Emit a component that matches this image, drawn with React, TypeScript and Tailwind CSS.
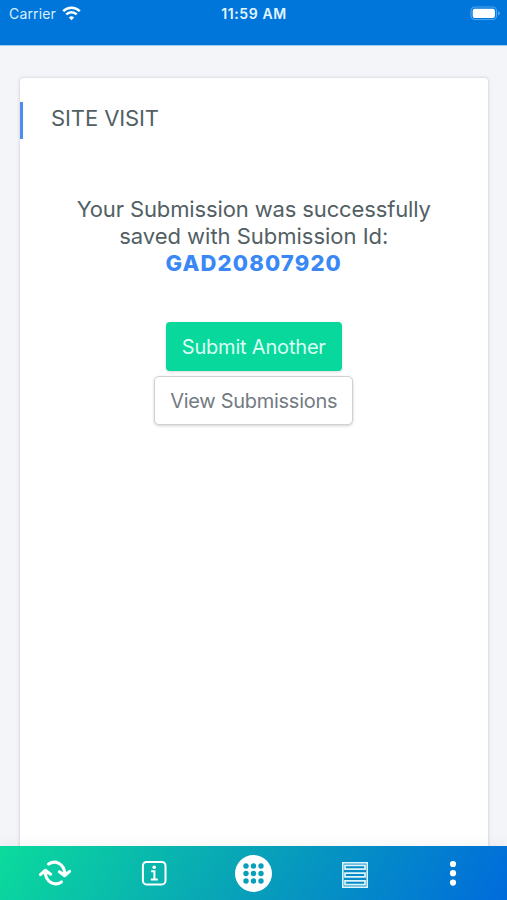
import type { ReactNode } from "react";

function WifiIcon() {
  return (
    <svg className="-mt-[2px] ml-[6px] h-[15px] w-[19px]" viewBox="0 0 19 15" fill="none" stroke="#fff" strokeWidth="2.6">
      <path d="M1.2 5.1a11.8 11.8 0 0 1 16.6 0" />
      <path d="M4.3 8.4a7.4 7.4 0 0 1 10.4 0" />
      <path d="M9.5 14.3 6.8 11.5a3.9 3.9 0 0 1 5.4 0z" fill="#fff" stroke="none" />
    </svg>
  );
}

function BatteryIcon() {
  return (
    <svg className="-mr-px -mt-[2px] h-[15px] w-[31px]" viewBox="0 0 31 15">
      <rect x="1" y="1" width="25.5" height="12.5" rx="3.8" fill="none" stroke="#4fa5ee" strokeWidth="1.2" />
      <rect x="2.7" y="2.7" width="22.2" height="9.2" rx="2" fill="#fff" />
      <path d="M28 5.2q2 .6 2 2.1t-2 2.1z" fill="#4fa5ee" />
    </svg>
  );
}

function RefreshIcon() {
  return (
    <svg className="h-[28px] w-[34px]" viewBox="0 0 34 28" fill="none" stroke="#fff" strokeWidth="3" strokeLinecap="round" strokeLinejoin="round">
      <path d="M10.6 5.1C17 .6 26.2 4.4 26.8 14.8" />
      <path d="m21.3 12.8 5.3 4 5-4.4" />
      <path d="M23.4 22.9C17 27.4 7.8 23.6 7.2 13.2" />
      <path d="m2.4 15.6 5-4.4 5.3 4" />
      <path d="m23.4 13.4 3.2 2.4 3-2.5z" fill="#fff" strokeWidth="1.2" />
      <path d="m4.4 14.7 3-2.5 3.2 2.4z" fill="#fff" strokeWidth="1.2" />
    </svg>
  );
}

function InfoIcon() {
  return (
    <svg className="h-[26px] w-[26px]" viewBox="0 0 26 26" fill="none" stroke="#fff" strokeWidth="2">
      <rect x="1.9" y="1.9" width="22.6" height="22.6" rx="3.8" />
      <circle cx="13.2" cy="7.3" r="1.8" fill="#fff" stroke="none" />
      <path d="M10.1 11.3h3.3v8.1M9.8 19.6h7" />
    </svg>
  );
}

const gridStops = [11, 18.5, 26];

function GridIcon() {
  return (
    <svg className="h-[37px] w-[37px]" viewBox="0 0 37 37">
      <circle cx="18.5" cy="18.5" r="18.5" fill="#fff" />
      {gridStops.map((y) => gridStops.map((x) => <circle key={`${x}-${y}`} cx={x} cy={y} r="2.7" fill="#079fb9" />))}
    </svg>
  );
}

function ListIcon() {
  return (
    <svg className="ml-1 mt-[3px] h-[26px] w-[26px]" viewBox="0 0 26 26" fill="none" stroke="#dcf4fb">
      <rect x=".8" y=".8" width="24.4" height="24.4" strokeWidth="1.6" />
      <path d="M3 3.3h20v3.8H3zM3 11.1h20v3.8H3zM3 18.9h20v3.8H3z" strokeWidth="1.7" />
    </svg>
  );
}

function MoreIcon() {
  return (
    <svg className="ml-px h-[26px] w-[8px]" viewBox="0 0 8 26" fill="#fff">
      <circle cx="4" cy="4" r="3.1" />
      <circle cx="4" cy="13.2" r="3.1" />
      <circle cx="4" cy="22.6" r="3.1" />
    </svg>
  );
}

function NavItem({ label, children }: { label: string; children: ReactNode }) {
  return (
    <button type="button" aria-label={label} className="flex flex-1 items-center justify-center">
      {children}
    </button>
  );
}

export default function App() {
  return (
    <div className="flex h-[900px] w-[507px] flex-col overflow-hidden bg-[#f3f5f9] font-['Inter',sans-serif]">
      <header className="h-[45px] shrink-0 bg-[#0076da] text-white shadow-[0_1px_0_#9fcdf0]">
        <div className="grid h-7 grid-cols-3 items-center pl-[8px] pr-[7px]">
          <div className="flex items-center pl-px text-[#d9efff]">
            <span className="-mt-px text-[14px] tracking-[0.15px]">Carrier</span>
            <WifiIcon />
          </div>
          <span className="-mt-px text-center text-[14px] font-semibold tracking-[0.62px] text-[#e3f5ff]">11:59 AM</span>
          <div className="flex justify-end">
            <BatteryIcon />
          </div>
        </div>
      </header>

      <main className="flex-1 px-5 pt-[33px]">
        <section className="h-full w-[467.5px] rounded-t-[4px] bg-white pt-6 shadow-[0_0_3px_1px_rgba(0,0,0,0.11)]">
          <h1 className="flex h-[37px] items-center border-l-[3px] border-[#4c8df0] pb-[4px] pl-[28px] text-[22px] tracking-[-0.1px] text-[#526064]">
            SITE VISIT
          </h1>
          <p className="mt-[57px] text-center text-[22px] leading-[27px] tracking-[-0.13px] text-[#526064]">
            Your Submission was successfully
            <br />
            <span className="tracking-[-0.02px]">saved with Submission Id:</span>
            <br />
            <strong className="font-extrabold tracking-[1.15px] text-[#3988f5]">GAD20807920</strong>
          </p>
          <div className="mt-[45px] flex flex-col items-center gap-[5px]">
            <button type="button" className="h-[49px] w-[176px] rounded-[4px] bg-[#08d89c] text-[20px] tracking-[-0.19px] text-[#dcfff4] shadow-[0_1px_3px_rgba(0,0,0,0.16)]">
              Submit Another
            </button>
            <button type="button" className="h-[49px] w-[199px] rounded-[5px] border border-[#cfd1d4] bg-white text-[20px] tracking-[-0.29px] text-[#737b82] shadow-[0_1px_3px_rgba(0,0,0,0.18)]">
              View Submissions
            </button>
          </div>
        </section>
      </main>

      <nav className="relative flex h-[54px] shrink-0 bg-[linear-gradient(120deg,#0bdb9c_0%,#08a6b6_45%,#006bdc_100%)] px-[5px] shadow-[0_-4px_12px_rgba(0,0,0,0.04)]">
        <NavItem label="Refresh"><RefreshIcon /></NavItem>
        <NavItem label="Information"><InfoIcon /></NavItem>
        <NavItem label="Applications"><GridIcon /></NavItem>
        <NavItem label="Submissions"><ListIcon /></NavItem>
        <NavItem label="More"><MoreIcon /></NavItem>
      </nav>
    </div>
  );
}
